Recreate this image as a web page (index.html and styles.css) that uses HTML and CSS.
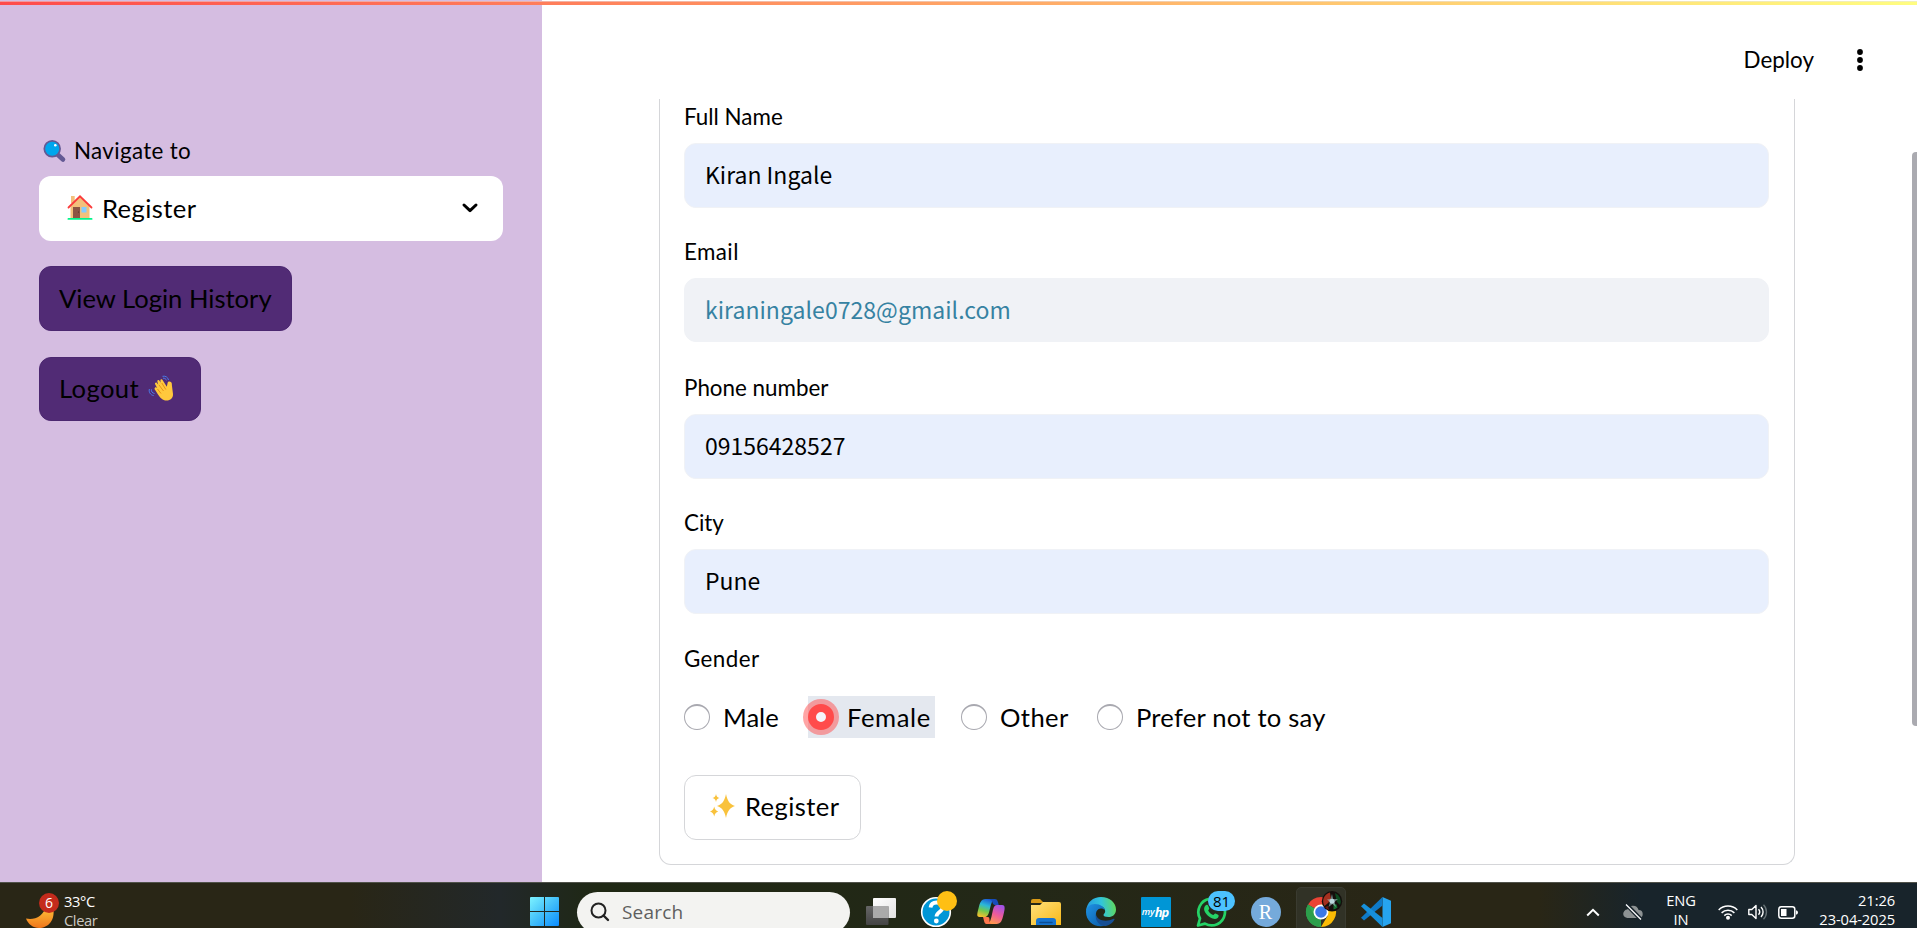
FILE: index.html
```html
<!DOCTYPE html>
<html lang="en">
<head>
<meta charset="utf-8">
<title>Register</title>
<link rel="stylesheet" href="styles.css">
</head>
<body>
<div class="app">
  <div class="decoration"></div>
  <aside class="sidebar">
    <div class="nav-label">
      <svg class="nav-icon" viewBox="0 0 22 22"><path d="M14 14.500l5.500 5" stroke="#635994" stroke-width="4.600" stroke-linecap="round"/><circle cx="8.700" cy="8.800" r="7.900" fill="#00a6ed" stroke="#635994" stroke-width="1.700"/><circle cx="11.800" cy="5.200" r="1.300" fill="#fff"/></svg>
      <span class="t-nav">Navigate to</span>
    </div>
    <div class="select">
      <svg class="house" viewBox="0 0 25 25"><path d="M3.500 1h3.700v7H3.500zM12.500 1.500L22 11v12H3V11z" fill="#f3c07b"/><path d="M1 12.500L12.500 1.300 24 12.500" fill="none" stroke="#fb3b3b" stroke-width="1.800" stroke-linecap="round"/><rect x="5.500" y="12" width="7" height="11" fill="#8c5543"/><circle cx="11" cy="17" r=".6" fill="#4a2b20"/><rect x="14" y="12" width="5" height="5.500" fill="#83cbff"/><rect x="0" y="23" width="25" height="1.800" rx=".9" fill="#00f58a"/></svg>
      <span class="t-select">Register</span>
      <svg class="chevron" viewBox="0 0 16 10"><path d="M2 2l6 5.700L14 2" fill="none" stroke="#000" stroke-width="3" stroke-linecap="round" stroke-linejoin="round"/></svg>
    </div>
    <button class="side-btn"><span class="t-history">View Login History</span></button>
    <button class="side-btn"><span class="t-logout">Logout</span>
      <svg class="wave" viewBox="0 0 25 26"><path d="M9.500 19.500L7 15.500c-1-1.300-1.200-2.200-.6-2.800.7-.7 1.500-.3 2.400.5l-2.200-4c-.6-1.200.9-2.200 1.800-1.200l1.400 1.700-.9-3c-.4-1.500 1.300-2.200 2.100-.9l1 2-.1-2.200c0-1.500 1.700-1.700 2.300-.4l4.100 6.600.8-3.800c.3-1.600 2.400-1.900 3.600-.7.8.8.7 1.900.7 2.900L24.500 19c.2 4-2.500 6.500-6.500 6.500-4 0-6-2.500-8.500-6z" fill="#ffc83d"/><path d="M9 14l3.500 4.500M10.500 10l4.500 6M13.300 8l4 6.500" stroke="#e79015" stroke-width="1" fill="none"/><path d="M14 1.300c3-.7 5.500 1 6 3.700M14.500 3.200c1.700-.2 3 .6 3.500 2.200M.9 14c-.9 3 1 6 4.300 6.600M2.900 14.300c-.4 2.200.9 3.800 3.200 4.200" stroke="#4a7be8" stroke-width="1" fill="none"/></svg>
    </button>
  </aside>
  <main class="main">
    <header class="header">
      <span class="t-deploy">Deploy</span>
      <svg class="dots" viewBox="0 0 6 22"><circle cx="3" cy="3" r="2.900"/><circle cx="3" cy="11" r="2.900"/><circle cx="3" cy="19" r="2.900"/></svg>
    </header>
    <form class="form">
      <div class="field"><label class="label"><span class="t-name">Full Name</span></label><div class="input filled">Kiran Ingale</div></div>
      <div class="field"><label class="label"><span class="t-email">Email</span></label><div class="input typed">kiraningale0728@gmail.com</div></div>
      <div class="field"><label class="label"><span class="t-phone">Phone number</span></label><div class="input filled">09156428527</div></div>
      <div class="field"><label class="label"><span class="t-city">City</span></label><div class="input filled">Pune</div></div>
      <div class="gender">
        <label class="label"><span class="t-gender">Gender</span></label>
        <div class="radios">
          <div class="option w-male"><span class="radio"></span><span class="t-male">Male</span></div>
          <div class="option w-female"><span class="radio on"></span><span class="t-female">Female</span></div>
          <div class="option w-other"><span class="radio"></span><span class="t-other">Other</span></div>
          <div class="option"><span class="radio"></span><span class="t-prefer">Prefer not to say</span></div>
        </div>
      </div>
      <button class="submit" type="button">
        <svg class="sparkles" viewBox="0 0 25 24"><path d="M16 0c1.500 7 3.500 10 9 12-5.500 2-7.500 5-9 12-1.500-7-3.500-10-9-12 5.500-2 7.500-5 9-12zM6 0c.6 2.600 1.400 3.500 3.500 4C7.400 4.500 6.600 5.400 6 8 5.400 5.400 4.600 4.500 2.500 4 4.600 3.500 5.400 2.600 6 0zM4.200 12.500c.7 3 1.700 4.200 4 5-2.300.8-3.300 2-4 5-.7-3-1.700-4.200-4.200-5 2.500-.8 3.500-2 4.200-5z" fill="#f9c23c"/></svg>
        <span class="t-submit">Register</span>
      </button>
    </form>
    <div class="scroll-thumb"></div>
  </main>
</div>
<footer class="taskbar">
  <div class="weather">
    <svg class="moon" viewBox="0 0 38 38"><defs><linearGradient id="mo" x1="0" y1="0" x2="0" y2="1"><stop offset="0" stop-color="#ffc93c"/><stop offset="1" stop-color="#f0761b"/></linearGradient></defs><path d="M0 26.500c8 2 18-2 20-13l7 1c3 14-5 21.500-14 21.500C7 36 2 32 0 26.500z" fill="url(#mo)"/><circle cx="23" cy="11" r="10" fill="#c42b1c"/></svg>
    <span class="weather-count">6</span>
    <div class="weather-text"><span>33°C</span><span class="dim">Clear</span></div>
  </div>
  <div class="start">
    <svg width="30" height="30" viewBox="0 0 30 30"><defs><linearGradient id="wi" x1="0" y1="0" x2="1" y2="1"><stop offset="0" stop-color="#7df3ff"/><stop offset=".5" stop-color="#42bffa"/><stop offset="1" stop-color="#0a8cff"/></linearGradient></defs><path d="M1 0h13v14H0V1a1 1 0 0 1 1-1zM15 0h13a1 1 0 0 1 1 1v13H15zM0 15h14v14H1a1 1 0 0 1-1-1zM15 15h14v13a1 1 0 0 1-1 1H15z" fill="url(#wi)"/></svg>
  </div>
  <div class="search">
    <svg width="20" height="20" viewBox="0 0 20 20"><circle cx="8.500" cy="8.500" r="7" fill="none" stroke="#222" stroke-width="2"/><path d="M13.500 13.500l4.500 4.500" stroke="#222" stroke-width="2.400" stroke-linecap="round"/></svg>
    <span>Search</span>
  </div>
  <div class="apps">
    <div class="cell"><svg viewBox="0 0 30 30"><defs><linearGradient id="t1" x1="0" y1="0" x2="0" y2="1"><stop offset="0" stop-color="#666"/><stop offset="1" stop-color="#444"/></linearGradient><linearGradient id="t2" x1="0" y1="0" x2="1" y2="1"><stop offset="0" stop-color="#fff"/><stop offset="1" stop-color="#e2e2e2"/></linearGradient></defs><rect x="7" y="1" width="23" height="20" rx="1" fill="url(#t2)"/><rect x="0" y="9" width="22.500" height="19" rx="1" fill="url(#t1)"/><rect x="7" y="9" width="15.500" height="12" fill="#aaa"/></svg></div>
    <div class="cell"><svg viewBox="0 0 30 30"><circle cx="15" cy="15" r="14.300" fill="#0096d6" stroke="#fff" stroke-width="1.600"/><path d="M9.500 10.500c.5-3.500 3-5 6-5 3.500 0 6 1.800 6 5 0 4.500-6 4.500-6 9" fill="none" stroke="#fff" stroke-width="3.800"/><circle cx="15.300" cy="24" r="2.400" fill="#fff"/><circle cx="26" cy="4" r="10" fill="#ffbf14"/></svg></div>
    <div class="cell"><svg viewBox="0 0 30 30"><defs><linearGradient id="c1" x1=".6" y1="0" x2=".3" y2="1"><stop offset="0" stop-color="#1c5fd6"/><stop offset=".35" stop-color="#2bb8d8"/><stop offset=".65" stop-color="#6fc950"/><stop offset="1" stop-color="#f4c02c"/></linearGradient><linearGradient id="c2" x1=".7" y1="0" x2=".3" y2="1"><stop offset="0" stop-color="#a152e8"/><stop offset=".5" stop-color="#ee5b9b"/><stop offset="1" stop-color="#ff9a4b"/></linearGradient></defs><path d="M18 2h-8.500C5 2 3.800 6 2.600 11S0 20 3.500 20h5c3 0 4-2.500 5-6.500S15 5 18 2z" fill="url(#c1)"/><path d="M12 27h8.500c4.500 0 5.700-4 6.900-9S30 8 26 8h-5c-3 0-3.500 3-4.500 7S15 24.500 12 27z" fill="url(#c2)"/><path d="M12 2h7c2.500 0 3 3 3.800 6H20c-2 0-3-.5-3.500-2.500S14.500 2 12 2z" fill="#174cba"/><path d="M7 20h5c1 0 1.500 1 1.500 3s.5 4 3 4h-6C8 27 8 22.500 7 20z" fill="#ff774d"/></svg></div>
    <div class="cell"><svg viewBox="0 0 30 30"><defs><linearGradient id="f1" x1="0" y1="0" x2="1" y2="1"><stop offset="0" stop-color="#ffe17b"/><stop offset="1" stop-color="#f8b818"/></linearGradient></defs><path d="M0 4a2 2 0 0 1 2-2h7l4 4H0z" fill="#d99a16"/><path d="M0 8h9l3-3h16a2 2 0 0 1 2 2v21H0z" fill="url(#f1)"/><path d="M5 28v-4a3 3 0 0 1 3-3h14a3 3 0 0 1 3 3v4z" fill="#1674d1"/><path d="M9 25.500h12" stroke="#0b4d95" stroke-width="1.500" stroke-linecap="round"/></svg></div>
    <div class="cell"><svg viewBox="0 0 30 30"><defs><linearGradient id="e1" x1="0" y1=".3" x2="1" y2=".2"><stop offset="0" stop-color="#259be0"/><stop offset=".5" stop-color="#31c5dc"/><stop offset="1" stop-color="#63da55"/></linearGradient><linearGradient id="e2" x1="0" y1="0" x2="1" y2="1"><stop offset="0" stop-color="#1f93e5"/><stop offset="1" stop-color="#0b59a4"/></linearGradient></defs><path d="M0 14C1 5 7 0 15 0c9 0 15 6 15 12.500 0 5-3.500 7.500-7.500 7.500-3.500 0-5-1-5-2s1.700-1.700 1.700-4C19.200 11 16 8.500 11.500 8.500 6 8.500 1.500 11 0 14z" fill="url(#e1)"/><path d="M0 15c0-5 4-8 9-8 5.500 0 9.500 3 10 6.500-1-1.500-2.500-2-4-2-4 0-5.500 4-5 7.500.7 5.500 5.500 10 10 9.300C10 32 0 25 0 15z" fill="url(#e2)"/><path d="M10 17c-1.500 6.500 3.500 12.500 10 12 4-1 7-3.500 8.500-6.500.3-.7-.3-1-.9-.7C20 25.500 10.500 23.500 10 17z" fill="#174f94"/></svg></div>
    <div class="cell"><div class="hp"><span class="my">my</span><b>hp</b></div></div>
    <div class="cell"><svg viewBox="0 0 30 30"><path d="M2 28.500l2-7A13.300 13.300 0 1 1 9 26.600z" fill="#24291b" stroke="#25d366" stroke-width="2.700" stroke-linejoin="round"/><path d="M9.500 8.500c1-1 2.200-.8 2.700.3l1 2.400c.3.800-.8 1.700-1 2.300 1 2 2.700 3.500 5 4.500.7-.4 1.500-1.900 2.300-1.500l2.600 1.300c1.100.6.500 2.400-.5 3.200-2 1.500-4.600 1-7.600-.8-3-1.800-5-4.300-5.700-6.700-.5-2 0-3.800 1.200-5z" fill="#25d366"/></svg><span class="wa-badge">81</span></div>
    <div class="cell"><div class="rstudio">R</div></div>
    <div class="cell active"><svg viewBox="0 0 30 30"><path d="M15 15L2 7.500A15 15 0 0 1 28 7.500z" fill="#ea4335"/><path d="M15 15L2 7.500A15 15 0 0 0 15 30z" fill="#34a853"/><path d="M15 7.500h13A15 15 0 0 1 15 30l6.500-11z" fill="#fbbc05"/><path d="M2 7.500L8.500 18.800 15 22.500 13 30A15 15 0 0 1 2 7.500z" fill="#2c9e4b"/><circle cx="15" cy="15" r="7.500" fill="#fff"/><circle cx="15" cy="15" r="5.800" fill="#3b78e7"/><circle cx="26" cy="4.300" r="10.200" fill="#140f0c"/><path d="M24-4.500A9 9 0 0 0 18.500 9l3-2.500L25 3z" fill="#a5301f"/><path d="M19 10l3-1 1 4a9 9 0 0 1-4-3z" fill="#6b160f"/><path d="M29-4a9 9 0 0 1 5 12l-3-3-1-4z" fill="#0b4a20"/><path d="M27.500 7l3 .5 1 3a9 9 0 0 1-4 2z" fill="#13702f"/><path d="M26-3l1.200 5L32 2l-3.500 3 1.500 5-3.500-3-4 3 1.500-5L21 2.500l3.500-.5z" fill="#a9cfd3" opacity=".55"/><circle cx="26" cy="4.300" r="2.500" fill="#b9dadd"/></svg></div>
    <div class="cell"><svg viewBox="0 0 30 30"><path d="M21.500 0L30 3.700v22.600L21.500 30z" fill="#26a4ef"/><path d="M21.500 0v8.500L3 23.500l-3-2.700z" fill="#0f7ac8"/><path d="M0 9.200l3-2.700L21.500 21v9z" fill="#1690dc"/></svg></div>
  </div>
  <div class="tray">
    <svg class="tray-up" viewBox="0 0 14 9"><path d="M1.200 7.500L7 1.800l5.800 5.700" fill="none" stroke="#fff" stroke-width="2"/></svg>
    <svg class="tray-cloud" viewBox="0 0 20 16"><path d="M4.500 14a4.200 4.200 0 0 1-.2-8.400A6 6 0 0 1 15.600 6 4 4 0 0 1 15.800 14z" fill="#8d9293"/><path d="M3 0l15 15.500" stroke="#18242b" stroke-width="4"/><path d="M3 .5l15 15" stroke="#fff" stroke-width="1.300"/></svg>
    <div class="lang"><span>ENG</span><span>IN</span></div>
    <svg class="tray-wifi" viewBox="0 0 20 16"><g fill="none" stroke="#fff" stroke-width="1.500"><path d="M.7 6a13 13 0 0 1 18.600 0M3.600 8.900a9 9 0 0 1 12.800 0M6.300 11.600a5.300 5.300 0 0 1 7.400 0"/></g><circle cx="10" cy="13.800" r="2" fill="#fff"/></svg>
    <svg class="tray-sound" viewBox="0 0 20 16"><g fill="none" stroke="#fff" stroke-width="1.400"><path d="M.8 5.500h3L8 1.500v13l-4.200-4h-3z" stroke-linejoin="round"/><path d="M10.500 5.300a4 4 0 0 1 0 5.400M13 2.900a7.300 7.300 0 0 1 0 10.200"/><path d="M15.500.7a10.500 10.500 0 0 1 0 14.600" stroke="#657074"/></g></svg>
    <svg class="tray-battery" viewBox="0 0 20 13"><rect x=".8" y=".8" width="16" height="11.400" rx="2.500" fill="none" stroke="#fff" stroke-width="1.500"/><rect x="3" y="3" width="5.500" height="7" fill="#fff"/><path d="M18 4.300q2 .2 2 2.200t-2 2.200z" fill="#fff"/></svg>
    <div class="clock"><span>21:26</span><span>23-04-2025</span></div>
  </div>
</footer>
</body>
</html>
```
FILE: styles.css
```css
* { box-sizing: border-box; }
body { margin: 0; width: 1917px; height: 928px; overflow: hidden; background: #fff; font-family: Lato, "Open Sans", sans-serif; color: #000; }
button { font: inherit; color: inherit; cursor: pointer; }
svg { display: block; flex: none; overflow: visible; }
span { white-space: nowrap; }

.app { position: relative; display: flex; height: 882px; }
.decoration { position: absolute; top: 1px; left: 0; right: 0; height: 4px; background: linear-gradient(90deg, #ff4b4b, #fffd80); border-top: 1px solid rgba(230, 230, 240, .5); }

.sidebar { width: 542px; flex: none; background: #d5bde1; padding: 133px 39px 0 39px; display: flex; flex-direction: column; align-items: flex-start; font-size: 25.6px; }
.nav-label { display: flex; align-items: center; height: 35px; margin: 0 0 8px 4px; font-size: 22.4px; }
.nav-icon { width: 23px; height: 22px; margin-right: 8px; }
.select { display: flex; align-items: center; width: 464px; height: 65px; border-radius: 12px; background: #fff; padding: 0 25px 2px 28px; margin-bottom: 25px; }
.house { width: 26px; height: 25px; margin-right: 9px; }
.chevron { width: 16px; height: 10px; margin-left: auto; }
.side-btn { display: flex; align-items: center; height: 65px; border: 1px solid #4b2770; border-radius: 12px; background: #512b75; padding: 0 0 2px 19px; width: 253px; margin-bottom: 26px; }
.side-btn + .side-btn { width: 162px; height: 64px; }
.wave { width: 26px; height: 26px; margin-left: 9px; }
.t-nav { letter-spacing: .34px; }
.t-select, .t-submit { letter-spacing: .4px; }
.t-logout { letter-spacing: .4px; }
.t-email, .t-gender { letter-spacing: .4px; }
.t-female { letter-spacing: .6px; }
.t-other { letter-spacing: .4px; }
.t-prefer { letter-spacing: .22px; }

.main { position: relative; flex: 1; display: flex; flex-direction: column; }
.header { height: 99px; flex: none; display: flex; align-items: center; justify-content: flex-end; padding: 20px 54px 0 0; font-size: 22.4px; }
.dots { width: 6px; height: 22px; margin-left: 43px; }
.form { width: 1136px; height: 766px; margin-left: 117px; border: 1px solid #d5d6d9; border-top: 0; border-radius: 0 0 12px 12px; padding: 0 24px; display: flex; flex-direction: column; align-items: flex-start; }
.field { width: 1085px; height: 135.400px; }
.label { display: block; height: 44px; line-height: 35px; font-size: 22.4px; }
.input { height: 65px; line-height: 60px; border-radius: 12px; border: 1px solid #f0f2f6; padding-left: 20px; font-family: "Noto Sans CJK SC", sans-serif; font-size: 23px; white-space: nowrap; }
.filled { background: #e8effd; }
.typed { background: #f0f2f6; color: #3682a2; height: 64px; letter-spacing: .04px; }
.radios { display: flex; align-items: center; height: 42px; margin-top: 11px; font-size: 25.6px; }
.option { display: flex; align-items: center; height: 42px; }
.radio { width: 26px; height: 26px; border-radius: 50%; border: 1px solid #a9a9b0; border-top-width: 2px; background: #fff; margin-right: 13px; }
.radio.on { border: 8px solid #ff4b4b; background: #f5f5fa; box-shadow: 0 0 0 5px rgba(255, 75, 75, .5); }
.w-male { width: 124px; }
.w-female { width: 127px; margin-right: 26px; background: #e4e8ef; }
.w-other { width: 136px; }
.submit { display: flex; align-items: center; width: 177px; height: 65px; margin-top: 37px; border: 1px solid #d5d6d9; border-radius: 12px; background: #fff; padding: 0 0 2px 25px; font-size: 25.6px; }
.sparkles { width: 25px; height: 24px; margin-right: 10px; }
.scroll-thumb { position: absolute; right: 0; top: 152px; width: 5px; height: 574px; background: #aaaab0; border-radius: 4px 0 0 4px; }

.taskbar { display: flex; align-items: center; height: 59px; border-top: 1px solid #50524a; background: linear-gradient(90deg, #292616 0, #292616 350px, #22282a 500px, #1f2814 600px, #232817 1000px, #292616 1400px, #292616 1540px, #18242b 1640px, #18242b 100%); color: #fff; font-family: "Open Sans", "Noto Sans", sans-serif; font-size: 14.700px; }
.weather { position: relative; display: flex; width: 530px; padding: 0 0 3px 26px; }
.moon { width: 38px; height: 38px; }
.weather-count { position: absolute; left: 39px; top: 1px; width: 20px; text-align: center; line-height: 20px; font-size: 14px; }
.weather-text, .lang, .clock { display: flex; flex-direction: column; line-height: 19px; padding-bottom: 4px; letter-spacing: -.1px; }
.weather-text { margin-left: 0; padding: 0; letter-spacing: -.4px; }
.dim { color: #c9c9c4; }
.start { width: 47px; }
.search { width: 273px; height: 41px; border-radius: 21px; background: #f3f3f1; color: #5f5f5f; display: flex; align-items: center; padding-left: 13px; gap: 12px; font-size: 19px; letter-spacing: .2px; }
.apps { display: flex; margin-left: 3px; }
.cell { position: relative; width: 55px; height: 51px; display: flex; align-items: center; justify-content: center; }
.cell > svg { width: 30px; height: 30px; }
.active { width: 50px; margin: 0 2.500px; border: 1px solid #3a3b30; border-radius: 5px; background: #313226; }
.hp { width: 30px; height: 30px; border-radius: 1px; background: #0096d6; display: flex; align-items: center; justify-content: center; font-style: italic; font-size: 13px; line-height: 28px; letter-spacing: -1px; padding-right: 1px; }
.hp .my { font-size: 9.500px; font-weight: 600; letter-spacing: 0; }
.wa-badge { position: absolute; left: 25px; top: 4px; width: 27px; height: 20px; line-height: 20px; border-radius: 10px; background: #4cc2ff; color: #000; font-size: 15px; text-align: center; }
.rstudio { width: 30px; height: 30px; border-radius: 50%; background: #75aadb; font-family: "Liberation Serif", serif; font-size: 20px; line-height: 30px; text-align: center; }
.tray { display: flex; align-items: center; margin-left: auto; padding-right: 22px; }
.tray-up { width: 14px; height: 9px; margin-right: 23px; }
.tray-cloud { width: 20px; height: 16px; margin-right: 21px; }
.lang { width: 34px; align-items: center; margin-right: 20px; }
.tray-wifi { width: 20px; height: 16px; margin-right: 10px; }
.tray-sound { width: 20px; height: 16px; margin-right: 10px; }
.tray-battery { width: 20px; height: 13px; }
.clock { width: 97px; align-items: flex-end; }
```
